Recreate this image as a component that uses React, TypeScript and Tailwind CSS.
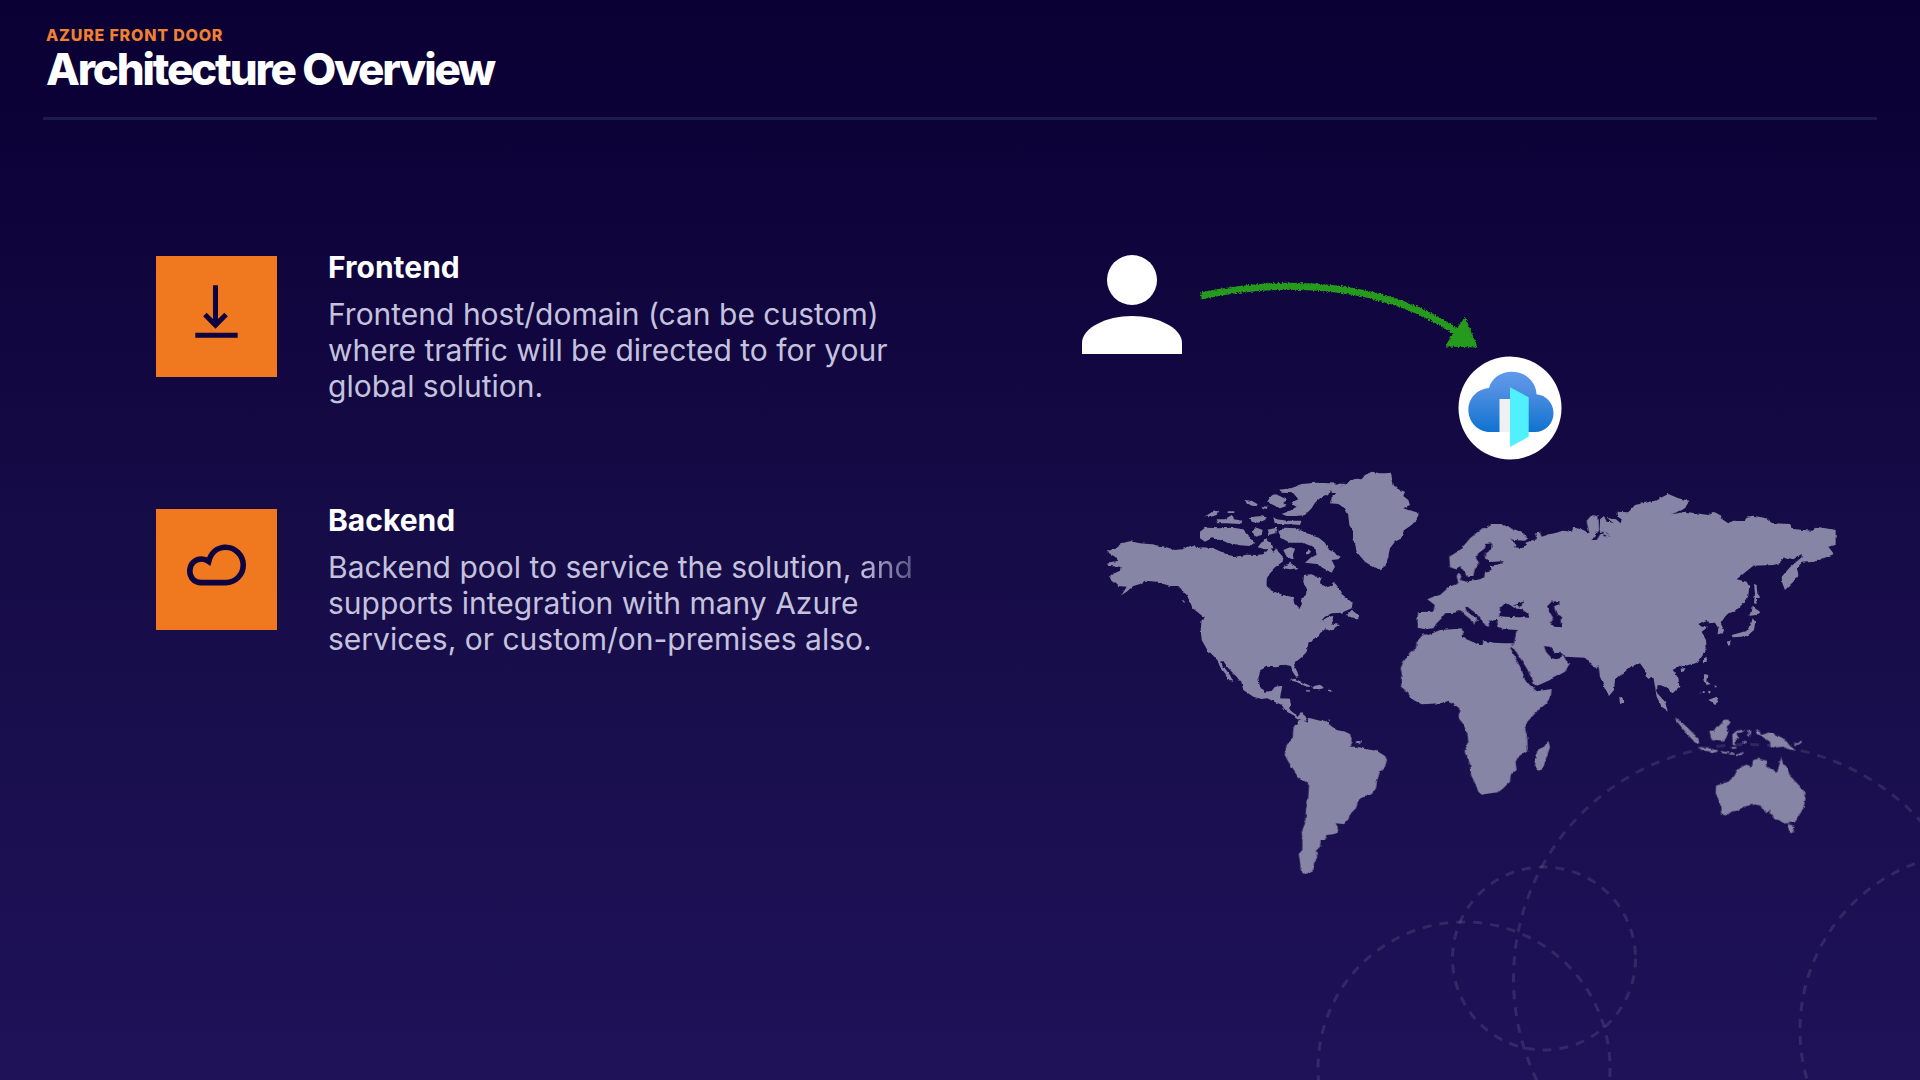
import type { ReactNode } from "react";

const LAND = "#8785a5";
const INK = "#0d0340";

function DownloadIcon() {
  return (
    <svg viewBox="0 0 120 120" className="size-full" fill="none" stroke={INK} strokeWidth="5" aria-hidden="true">
      <path d="M59 29v40M48.500 58L59 68.500 69.500 58M39 78.500h42" />
    </svg>
  );
}

function CloudIcon() {
  return (
    <svg viewBox="0 0 120 120" className="size-full" fill="none" stroke={INK} strokeWidth="5.500" aria-hidden="true">
      <path
        strokeLinejoin="miter"
        d="M45 73c-7.500 0-11.500-5.500-11.500-11.500 0-7 5-12 11.500-12 3 0 5 .8 7.300 2.500C54.500 43.500 60.500 38 69 38c9.500 0 17.500 8 17.500 17.500S79 73 69 73z"
      />
    </svg>
  );
}

type FeatureProps = { icon: ReactNode; title: string; children: ReactNode };

function Feature({ icon, title, children }: FeatureProps) {
  return (
    <article className="flex items-start gap-[51px]">
      <div className="mt-[5px] size-[121px] shrink-0 bg-[#f0781e]">{icon}</div>
      <div className="min-w-0">
        <h2 className="text-[30px] leading-[32px] font-bold text-white">{title}</h2>
        <p className="mt-[13px] max-w-[600px] text-[30px] leading-[36px] text-[#c5c2de]">{children}</p>
      </div>
    </article>
  );
}

function WorldMap() {
  return (
    <g fill={LAND} filter="url(#coast)">
      {/* North America and Greenland */}
      <g transform="translate(1090 460) scale(.3333)">
        <path d="M50 275L75 265 95 250 120 244 150 250 185 253 225 260 255 270 275 268 312 254 320 264 340 262 370 265 400 278 415 285 440 290 470 284 500 285 520 283 530 270 540 262 550 275 560 265 568 278 580 292 578 305 555 322 542 335 530 360 530 378 545 392 580 405 610 412 612 430 628 447 636 432 634 415 648 405 650 385 640 370 642 345 665 343 680 350 695 352 690 370 710 382 722 378 730 366 745 385 755 402 775 418 788 430 785 445 755 458 725 460 705 470 690 485 715 470 730 468 728 480 722 490 750 495 722 512 705 508 690 520 685 530 668 538 655 552 650 575 635 592 618 605 612 615 622 635 626 648 618 650 608 635 603 618 585 614 560 622 530 620 512 630 505 655 510 680 522 695 545 693 555 680 577 678 570 715 600 716 603 735 600 750 625 770 640 765 650 775 640 778 625 778 610 765 590 755 575 735 550 722 530 715 515 717 490 710 460 690 455 670 440 650 415 625 400 603 390 605 405 625 420 645 430 665 420 663 405 640 390 620 380 595 355 575 335 540 332 510 335 480 345 475 325 458 308 445 300 425 290 405 265 378 240 378 200 365 165 362 150 372 130 378 110 395 95 405 110 380 85 378 60 355 62 345 90 332 92 320 55 318 50 308 85 302 75 290z" />
        <path d="M768 468L785 450 792 455 805 465 805 475 790 474zM598 660L615 656 640 668 668 680 650 680 620 666zM672 678L690 674 704 684 688 688 670 686zM714 689l10 1v5l-10-1zM650 690l10 1v4l-10-1zM277 420l7 3-2 5-6-2z" />
        <path d="M720 85L750 82 770 72 782 60 800 56 815 58 825 45 845 35 870 40 885 40 903 38 908 60 912 80 930 90 945 95 940 108 955 120 960 135 940 145 955 150 975 155 987 160 980 180 965 195 940 212 935 235 915 245 900 265 895 290 885 322 870 328 845 318 825 305 812 290 800 275 795 250 785 240 790 215 778 195 775 165 765 145 745 132 720 130 725 112 740 100 722 98z" />
        <path d="M565 90L600 85 635 72 680 68 720 70 770 72 745 85 720 90 715 105 690 115 675 128 665 145 645 165 620 168 590 168 575 162 600 152 620 140 600 130 625 118 610 100 575 98zM540 112L555 103 570 108 592 120 580 128 590 138 570 145 550 135 532 125zM345 168L370 155 388 153 380 165 358 172zM413 154h20v5h-20zM463 120L485 122 503 133 498 140 475 132zM515 138l18 2-3 7-12-3zM380 178L405 178 425 165 432 178 457 182 450 192 410 190 385 190zM480 172L510 168 530 172 525 180 505 188 485 185zM550 172L560 178 590 182 635 182 630 195 600 193 555 192z" />
        <path d="M330 215L345 203 390 205 430 203 460 208 475 225 485 240 495 250 480 258 450 256 420 250 390 240 365 235 345 245 330 235zM485 210L500 203 518 210 515 225 495 230zM530 210L560 203 555 220 535 225zM565 215L580 203 620 205 650 220 680 228 705 248 715 268 752 290 745 298 725 300 735 320 725 338 700 325 680 312 645 308 665 290 680 285 675 262 655 255 640 248 600 248 575 235zM580 318L600 308 625 325 600 328 580 325zM503 262L525 235 545 250 550 265 525 268zM580 270L600 262 615 268 608 285 612 300 590 290zM648 275l8-7 7 7-7 8z" />
      </g>
      {/* South America */}
      <g transform="translate(1270 680) scale(.3333)">
        <path d="M72 100L85 108 92 99 105 107 110 120 100 124 95 110 80 114z" />
        <path d="M85 125L95 115 105 125 112 128 115 113 150 122 165 122 180 135 200 150 225 155 240 162 248 185 240 200 262 200 285 207 320 212 345 228 351 240 345 260 330 275 322 300 318 325 305 343 285 350 265 360 258 385 243 400 235 418 222 433 197 430 205 445 203 458 190 463 170 465 165 480 152 480 150 500 138 512 142 535 132 550 130 570 115 578 108 585 92 570 90 545 86 522 97 510 97 480 95 455 105 430 108 390 115 350 117 315 85 295 75 275 55 245 44 225 50 195 68 175 70 145zM258 184l14-1-2 10-12-1zM175 118l6 2-3 5z" />
      </g>
      {/* Africa, Europe and western Asia */}
      <g transform="translate(1390 490) scale(.3333)">
        <path d="M104 433L115 435 150 420 185 418 215 415 220 432 215 442 240 452 268 465 278 465 280 452 310 458 345 460 372 460 360 472 375 500 395 540 405 570 425 590 440 604 485 597 483 615 470 640 440 665 412 695 405 715 412 745 413 780 385 800 377 815 380 840 362 855 360 875 340 895 325 907 300 910 275 914 265 905 255 880 243 855 240 820 223 785 235 755 232 730 218 700 206 685 208 655 195 645 178 632 150 640 95 643 70 630 45 600 33 590 37 560 32 535 40 515 60 490 78 475 80 455 95 438z" />
        <path d="M475 752L480 772 470 800 458 838 445 842 435 828 437 810 442 780 462 770z" />
        <path
          fillRule="evenodd"
          d="M84 413L82 385 85 366 130 365 134 345 112 328 130 320 150 315 178 290 205 280 200 258 205 248 214 255 210 270 225 275 270 268 283 262 285 245 305 240 298 228 340 220 338 214 300 216 285 205 285 190 308 175 305 160 288 162 285 175 265 190 258 205 268 220 255 235 250 258 232 262 222 245 212 228 195 238 180 230 178 200 210 180 240 145 270 120 305 102 335 102 355 112 400 130 415 145 405 152 370 150 360 145 380 165 375 172 395 175 410 165 410 158 425 152 440 148 435 130 450 128 455 140 480 132 520 122 545 125 550 112 580 120 598 130 592 105 590 92 605 75 625 78 628 120 605 150 620 150 633 130 660 142 655 128 632 122 640 92V560H630L625 525 618 535 605 525 585 503 525 500 515 490 495 488 480 470 462 468 468 485 485 505 500 508 518 498 540 520 525 545 480 570 435 590 430 575 410 535 375 480 362 470 372 462 380 420 345 418 325 410 320 390 295 392 298 410 288 408 270 385 260 372 232 350 226 352 230 364 245 375 265 392 257 392 252 405 248 393 225 375 210 360 195 368 165 370 155 385 140 400 130 415 105 418zM328 378L330 355 345 340 360 345 375 355 395 358 415 372 417 383 385 382 345 380zM372 346L402 334 390 350zM470 350L485 335 508 333 508 345 492 352 500 372 517 380 512 390 515 412 490 410 482 402 490 385z"
        />
      </g>
      {/* Eastern Asia */}
      <g transform="translate(1600 480) scale(.3333)">
        <path d="M0 118L12 108 20 125 38 128 22 114 48 118 62 130 65 118 50 108 50 95 85 97 105 75 165 62 205 42 235 55 268 62 255 85 215 103 255 95 325 105 345 97 365 108 362 115 385 130 400 122 435 125 440 110 460 107 500 115 520 130 570 132 580 147 635 152 650 140 707 150 707 195 685 200 702 222 645 245 605 248 590 265 595 285 580 305 555 330 547 310 545 290 570 262 605 232 605 222 580 238 555 232 540 250 520 255 460 257 410 298 440 305 448 320 445 345 430 370 405 395 385 400 375 410 362 430 372 450 370 460 352 463 355 445 345 428 325 430 320 420 295 432 305 440 325 440 305 455 318 480 320 505 300 535 290 548 245 560 240 557 218 570 235 590 238 620 215 643 205 625 180 615 172 620 172 640 195 665 203 692 185 680 170 650 165 620 160 590 142 598 138 575 120 550 95 558 45 600 42 630 27 648 15 625 0 590V170L30 168 22 155 0 155z" />
        <path d="M462 312L470 315 472 340 480 350 468 355 470 372 462 370 465 340zM458 380L480 395 468 405 445 408 455 395zM458 415L466 425 462 450 445 465 425 470 398 472 395 465 420 458 440 452 452 435zM378 485L392 482 390 495 382 498zM312 535L320 530 320 545 312 550zM242 566l14-2-4 10-8 2zM313 582L325 585 322 605 332 612 320 615 310 600zM325 660L350 650 355 668 345 675 335 665zM342 616l8 2-2 6zM325 632l7 2-2 7-5-3zM308 634h6v5h-6zM296 636h5v4h-5zM58 650L68 655 70 668 60 672z" />
      </g>
      {/* South-east Asia and Australia */}
      <g transform="translate(1600 660) scale(.3333)">
        <path d="M224 176L240 182 265 205 295 235 298 250 285 248 260 220zM293 261L320 263 352 271 345 277 310 271zM328 212L340 212 360 195 375 178 385 180 393 188 380 200 385 215 372 245 350 243 335 240zM397 220L408 212 435 209 430 215 408 220 418 236 408 236 406 255 398 254zM465 210L480 212 482 225 495 222 505 217 530 225 555 238 570 258 588 272 570 268 550 260 530 262 512 262 510 245 490 232 470 222zM445 210h5v20h-5z" />
        <path fill="none" stroke={LAND} strokeWidth="5" d="M583 252Q600 254 604 243M362 276l22 3M388 281l16 1M410 287l20-9M430 245l10 2M395 264l14-1" />
        <path d="M348 377L385 365 403 348 412 330 430 318 440 314 455 320 460 300 475 296 503 303 497 315 515 328 530 335 537 318 543 293 552 315 562 325 570 348 590 368 610 390 617 415 610 445 595 470 585 487 555 490 535 480 525 478 515 460 508 462 512 448 497 460 485 438 465 433 440 438 420 450 395 455 380 466 362 463 365 445 352 410 347 400zM563 492L583 498 580 515 572 520 566 508z" />
      </g>
    </g>
  );
}

function ArchitectureDiagram() {
  return (
    <svg viewBox="1060 230 800 660" className="block w-full" role="img" aria-label="A user routed through Azure Front Door to services around the world">
      <defs>
        <filter id="coast" x="-2%" y="-2%" width="104%" height="104%">
          <feTurbulence type="fractalNoise" baseFrequency="0.2" numOctaves="2" seed="4" result="noise" />
          <feDisplacementMap in="SourceGraphic" in2="noise" scale="3" xChannelSelector="R" yChannelSelector="G" />
        </filter>
        <filter id="chalk" x="-5%" y="-10%" width="110%" height="120%">
          <feTurbulence type="fractalNoise" baseFrequency="0.6" numOctaves="2" seed="7" result="noise" />
          <feDisplacementMap in="SourceGraphic" in2="noise" scale="4" xChannelSelector="R" yChannelSelector="G" />
        </filter>
        <linearGradient id="cloud" x1="0" y1="0" x2="0" y2="1">
          <stop offset="0" stopColor="#5e9aed" />
          <stop offset=".3" stopColor="#508fe2" />
          <stop offset="1" stopColor="#0f72cf" />
        </linearGradient>
      </defs>

      <WorldMap />

      <g fill="#fff">
        <circle cx="1132" cy="280" r="25" />
        <path d="M1082 354v-11c0-15 24-27 50-27s50 12 50 27v11z" />
      </g>

      <g filter="url(#chalk)" fill="#259a1e">
        <path d="M1201 296C1290 277 1388 284 1458 333" fill="none" stroke="#259a1e" strokeWidth="7" />
        <path d="M1465 318L1477 347 1446 346 1453 334z" stroke="#259a1e" strokeWidth="1" />
      </g>

      <circle cx="1510" cy="408" r="51.500" fill="#fff" />
      <path
        fill="url(#cloud)"
        d="M1490 432c-12 0-21.600-9.800-21.600-22 0-11.500 8.500-21 20.600-22 2.500-9.500 11.500-16.300 22.500-16.300 13.500 0 24.500 9.300 25 22.500 9.500.8 17 8.800 17 19 0 10.500-8 18.800-18.500 18.800z"
      />
      <path fill="#f0f0f0" d="M1499.500 399h11v33h-11z" />
      <path fill="#50f0ff" d="M1510 387.300l18.700 10v39.500l-18.700 10.200z" />
    </svg>
  );
}

function OrbitBackdrop() {
  return (
    <svg
      viewBox="1300 730 620 350"
      className="pointer-events-none absolute right-0 bottom-0 w-[620px]"
      fill="none"
      stroke="#ffffff"
      strokeOpacity=".1"
      strokeWidth="3"
      strokeDasharray="9 8"
      aria-hidden="true"
    >
      <circle cx="1544" cy="958.500" r="91.500" />
      <circle cx="1464" cy="1068" r="146" />
      <circle cx="1747.500" cy="978.500" r="234" />
      <circle cx="1978" cy="1030" r="178" />
    </svg>
  );
}

export default function App() {
  return (
    <div className="relative min-h-screen overflow-hidden bg-linear-to-b from-[#0a0033] via-[#160c47] to-[#1f1259] font-['Inter',sans-serif]">
      <OrbitBackdrop />
      <header className="relative mx-[43px] border-b-[3px] border-[#1c1c48] pt-[25px] pb-[24px] pl-[3px]">
        <p className="text-base leading-[20px] font-extrabold tracking-wider text-[#f08032]">AZURE FRONT DOOR</p>
        <h1 className="text-[44px] leading-[48px] font-extrabold tracking-tighter text-white">Architecture Overview</h1>
      </header>
      <main className="relative grid grid-cols-[904fr_800fr] pt-[110px] pr-[60px] pb-10 pl-[156px]">
        <section className="flex flex-col gap-[100px] pt-[21px]">
          <Feature icon={<DownloadIcon />} title="Frontend">
            Frontend host/domain (can be custom)
            <br />
            where traffic will be directed to for your
            <br />
            global solution.
          </Feature>
          <Feature icon={<CloudIcon />} title="Backend">
            Backend pool to service the solution,{" "}
            <span className="bg-linear-to-r from-[#c5c2de] to-[#5b5585] bg-clip-text text-transparent">and</span>
            <br />
            supports integration with many Azure
            <br />
            services, or custom/on-premises also.
          </Feature>
        </section>
        <ArchitectureDiagram />
      </main>
    </div>
  );
}
